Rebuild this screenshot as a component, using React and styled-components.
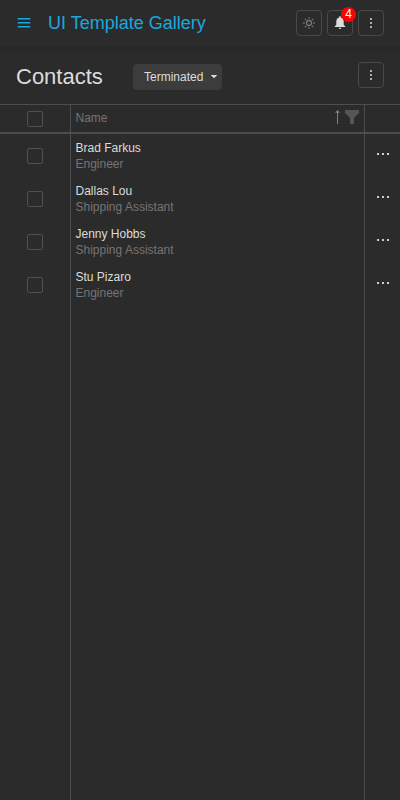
import React from 'react';
import styled, { createGlobalStyle } from 'styled-components';

const Global = createGlobalStyle`
  * { box-sizing: border-box; }
  body { margin: 0; background: #2b2b2b; color: #dcdcdc; font: 12px/16px "Liberation Sans", Arial, sans-serif; }
  svg { display: block; }
`;
const Page = styled.div`height: 100vh; display: flex; flex-direction: column; overflow: hidden;`;
const AppBar = styled.header`
  height: 46px; flex: none; display: flex; align-items: center; padding: 0 16px; color: #1ca8dd;
  box-shadow: 0 2px 10px rgba(0, 0, 0, 0.14);
`;
const Brand = styled.h1`margin: 0 auto 0 16px; font-size: 18px; font-weight: 400; line-height: 26px;`;
const Actions = styled.div`display: flex; gap: 5px;`;
const IconButton = styled.button`
  width: 26px; height: 26px; padding: 0; border: 1px solid #4a4a4a; border-radius: 4px; background: none;
  color: ${p => (p.$dim ? '#777' : '#dcdcdc')}; position: relative; display: flex; align-items: center; justify-content: center;
`;
const Badge = styled.span`
  position: absolute; top: -4px; right: -4px; width: 15px; height: 15px; border-radius: 50%;
  background: #f00; color: #fff; font: 12px/15px "Liberation Sans", Arial, sans-serif; text-align: center;
`;
const TitleBar = styled.div`height: 58px; flex: none; display: flex; align-items: center; padding: 4px 16px 0;`;
const Title = styled.h2`margin: 0 30px 0 0; width: 87px; font-size: 22px; font-weight: 400; line-height: 26px;`;
const Select = styled.button`
  width: 89px; height: 26px; margin-right: auto; padding: 0 4px 0 11px; border: 0; border-radius: 4px; background: #3c3c3c;
  color: #dcdcdc; font: 12px/26px "Liberation Sans", Arial, sans-serif; display: flex; align-items: center; justify-content: space-between;
`;
const TitleAction = styled.div`margin-top: -4px;`;
const Grid = styled.main`flex: 1; border-top: 1px solid #4d4d4d; display: flex; flex-direction: column;`;
const Row = styled.div`display: grid; grid-template-columns: 71px 294px 35px; height: 43px; flex: none;`;
const HeadRow = styled(Row)`height: 29px; border-bottom: 2px solid #4d4d4d;`;
const FillRow = styled(Row)`flex: 1; height: auto;`;
const Cell = styled.div`border-right: 1px solid #4d4d4d; &:last-child { border-right: 0; }`;
const CheckCell = styled(Cell)`display: flex; align-items: center; justify-content: center; padding-top: 1px;`;
const HeadCell = styled(Cell)`display: flex; align-items: center; padding: 0 5px 2px 4.5px; color: #757575;`;
const HeadLabel = styled.span`margin-right: auto;`;
const PersonCell = styled(Cell)`padding: 6px 5px 0 4.5px;`;
const MenuCell = styled(Cell)`padding: 19px 0 0 12px; color: #dcdcdc;`;
const Box = styled.span`width: 16px; height: 16px; border: 1px solid #505050; border-radius: 2px;`;
const Name = styled.div`color: #dcdcdc;`;
const Role = styled.div`color: #757575;`;

const MenuIcon = () => (
  <svg width="16" height="16" fill="currentColor"><path d="M1.700 3h12.600v1.600H1.700zM1.700 7h12.600v1.600H1.700zM1.700 11h12.600v1.600H1.700z" /></svg>
);
const MoreVertical = () => (
  <svg width="24" height="24" fill="currentColor">
    <circle cx="12" cy="8" r="1" /><circle cx="12" cy="12" r="1" /><circle cx="12" cy="16" r="1" />
  </svg>
);
const MoreHorizontal = () => (
  <svg width="14" height="2" fill="currentColor">
    <circle cx="1" cy="1" r="1.100" /><circle cx="6" cy="1" r="1.100" /><circle cx="11" cy="1" r="1.100" />
  </svg>
);
const Sun = () => (
  <svg width="12" height="12" viewBox="0 0 12 12" fill="none" stroke="currentColor">
    <circle cx="6" cy="6" r="2.500" strokeWidth="1.300" />
    <path d="M6 .2v1.500M6 10.300v1.500M.2 6h1.500M10.300 6h1.500M1.900 1.900l1.100 1.100M9 9l1.100 1.100M1.900 10.100l1.100-1.100M9 3l1.100-1.100" strokeWidth="1.300" />
  </svg>
);
const Bell = () => (
  <svg width="12" height="14" viewBox="0 0 12 14" fill="currentColor">
    <path d="M5.200.9a.8.8 0 011.600 0v.7C8.800 2 9.700 3.600 9.700 5.600v3.200l1.600 1.600v.7H.7v-.7L2.300 8.800V5.600c0-2 .9-3.600 2.900-4zM4.700 11.700h2.600a1.300 1.200 0 01-2.600 0z" />
  </svg>
);
const SortFilter = () => (
  <svg width="26" height="16" viewBox="0 0 26 16">
    <path d="M4 1h1v13H4zM4.500 0L7 2.700H2z" fill="#808080" />
    <path d="M12 0h14v3l-5 5v6h-4V8l-5-5z" fill="#555" />
  </svg>
);
const Caret = () => (
  <svg width="8" height="4" fill="currentColor"><path d="M.7 0h6.600L4 3.300z" /></svg>
);

const contacts = [
  ['Brad Farkus', 'Engineer'],
  ['Dallas Lou', 'Shipping Assistant'],
  ['Jenny Hobbs', 'Shipping Assistant'],
  ['Stu Pizaro', 'Engineer'],
];

export default function App() {
  return (
    <Page>
      <Global />
      <AppBar>
        <MenuIcon />
        <Brand>UI Template Gallery</Brand>
        <Actions>
          <IconButton $dim><Sun /></IconButton>
          <IconButton><Bell /><Badge>4</Badge></IconButton>
          <IconButton><MoreVertical /></IconButton>
        </Actions>
      </AppBar>
      <TitleBar>
        <Title>Contacts</Title>
        <Select>Terminated<Caret /></Select>
        <TitleAction><IconButton><MoreVertical /></IconButton></TitleAction>
      </TitleBar>
      <Grid>
        <HeadRow>
          <CheckCell><Box /></CheckCell>
          <HeadCell><HeadLabel>Name</HeadLabel><SortFilter /></HeadCell>
          <Cell />
        </HeadRow>
        {contacts.map(([name, role]) => (
          <Row key={name}>
            <CheckCell><Box /></CheckCell>
            <PersonCell><Name>{name}</Name><Role>{role}</Role></PersonCell>
            <MenuCell><MoreHorizontal /></MenuCell>
          </Row>
        ))}
        <FillRow><Cell /><Cell /><Cell /></FillRow>
      </Grid>
    </Page>
  );
}
